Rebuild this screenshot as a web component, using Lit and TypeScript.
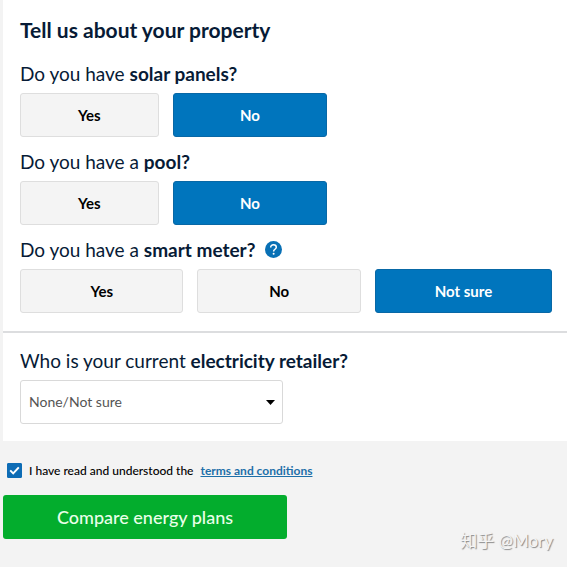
import { LitElement, html, css } from "lit";
import { customElement, property, state } from "lit/decorators.js";

@customElement("choice-row")
class ChoiceRow extends LitElement {
  @property({ type: Array }) options: string[] = [];
  @property() value = "";
  @property() label = "";

  static styles = css`
    :host { display: block; }
    .row { display: grid; gap: 14px; }
    .two { grid-template-columns: 9fr 10fr; max-width: 307px; }
    .three { grid-template-columns: 12fr 12fr 13fr; }
    .choice {
      box-sizing: border-box;
      height: 44px;
      padding: 0;
      border: 1px solid #dedede;
      border-radius: 3px;
      background: #f4f4f4;
      color: #000;
      font: 700 15px/20px Lato, sans-serif;
      cursor: pointer;
    }
    .choice[aria-pressed="true"] {
      background: #0075bd;
      border-color: #0868a6;
      color: #fff;
    }
  `;

  render() {
    return html`<div class="row ${this.options.length === 2 ? "two" : "three"}" role="group" aria-label=${this.label}>
      ${this.options.map(
        (o) => html`<button type="button" class="choice" aria-pressed=${o === this.value ? "true" : "false"}
          @click=${() => { this.value = o; }}>${o}</button>`
      )}
    </div>`;
  }
}

@customElement("app-root")
class AppRoot extends LitElement {
  @state() private agreed = true;

  static styles = css`
    :host {
      display: block;
      position: relative;
      box-sizing: border-box;
      min-height: 100vh;
      padding-left: 3px;
      background: #f3f3f3;
      color: #071b36;
      font-family: Lato, "Noto Sans CJK SC", sans-serif;
    }
    .card { background: #fff; }
    .section { padding: 16px 15px 18px 17px; }
    .retailer { border-top: 2px solid #dcdddf; padding-top: 17px; padding-bottom: 17px; }
    h1 { margin: 0 0 19px; font-size: 21px; line-height: 28px; font-weight: 700; }
    .question { display: flex; align-items: center; gap: 10px; margin: 0 0 9px; font-size: 19px; line-height: 21px; font-weight: 400; }
    .question b { font-weight: 700; }
    choice-row + .question { margin-top: 14px; }
    .help { display: flex; padding: 0; border: 0; background: none; cursor: pointer; }
    .help svg { width: 17px; height: 17px; }
    .field { position: relative; max-width: 263px; }
    select {
      box-sizing: border-box;
      width: 100%;
      height: 44px;
      padding: 0 32px 0 8px;
      border: 1px solid #d9d9d9;
      border-radius: 3px;
      background: #fff;
      color: #555;
      font: 400 14px/20px Lato, sans-serif;
      appearance: none;
    }
    .caret { position: absolute; right: 8px; top: 20px; width: 9px; height: 5px; pointer-events: none; }
    .terms { display: flex; align-items: center; gap: 7px; padding: 21px 4px 16px; color: #000; font-size: 12px; line-height: 17px; }
    .tick { position: relative; display: flex; }
    .tick input { appearance: none; width: 15px; height: 15px; margin: 0; border: 1px solid #0d6cb5; border-radius: 1px; background: #fff; }
    .tick input:checked { background: #0d6cb5; }
    .tick svg { position: absolute; inset: 0; width: 15px; height: 15px; pointer-events: none; }
    .terms label { font-weight: 500; }
    .terms a { color: #1d6fa9; font-weight: 700; }
    .submit {
      display: block;
      width: 100%;
      max-width: 284px;
      height: 44px;
      padding: 0;
      border: 0;
      border-radius: 3px;
      background: #03ad2d;
      color: #e9ffe9;
      font: 500 18px/24px Lato, sans-serif;
      cursor: pointer;
    }
    .mark {
      position: absolute;
      right: 14px;
      bottom: 14px;
      color: #f4f4f4;
      font-size: 17px;
      line-height: 24px;
      text-shadow: 1px 1px 1px #888;
    }
  `;

  render() {
    return html`
      <form @submit=${(e: Event) => e.preventDefault()}>
        <div class="card">
          <section class="section">
            <h1>Tell us about your property</h1>
            <h2 class="question"><span>Do you have <b>solar panels?</b></span></h2>
            <choice-row label="Solar panels" .options=${["Yes", "No"]} value="No"></choice-row>
            <h2 class="question"><span>Do you have a <b>pool?</b></span></h2>
            <choice-row label="Pool" .options=${["Yes", "No"]} value="No"></choice-row>
            <h2 class="question">
              <span>Do you have a <b>smart meter?</b></span>
              <button type="button" class="help" aria-label="About smart meters">
                <svg viewBox="0 0 17 17" fill="none">
                  <circle cx="8.5" cy="8.5" r="8.5" fill="#0870b5" />
                  <path d="M5.7 6.5C5.7 4.8 6.8 3.8 8.5 3.8s2.8 1 2.8 2.4c0 2-2.7 2.1-2.7 4.2" stroke="#fff" stroke-width="1.5" />
                  <circle cx="8.6" cy="12.8" r="1" fill="#fff" />
                </svg>
              </button>
            </h2>
            <choice-row label="Smart meter" .options=${["Yes", "No", "Not sure"]} value="Not sure"></choice-row>
          </section>
          <section class="section retailer">
            <label class="question" for="retailer"><span>Who is your current <b>electricity retailer?</b></span></label>
            <div class="field">
              <select id="retailer"><option>None/Not sure</option></select>
              <svg class="caret" viewBox="0 0 9 5"><path d="M0 0h9L4.5 5z" fill="#000" /></svg>
            </div>
          </section>
        </div>
        <div class="terms">
          <span class="tick">
            <input id="agree" type="checkbox" .checked=${this.agreed}
              @change=${(e: Event) => { this.agreed = (e.target as HTMLInputElement).checked; }} />
            <svg viewBox="0 0 15 15" fill="none"><path d="M3.2 7.4l3 3 5.6-6" stroke="#fff" stroke-width="2" /></svg>
          </span>
          <label for="agree">I have read and understood the</label>
          <a href="#terms">terms and conditions</a>
        </div>
        <button type="submit" class="submit">Compare energy plans</button>
      </form>
      <div class="mark">知乎 @Mory</div>
    `;
  }
}
